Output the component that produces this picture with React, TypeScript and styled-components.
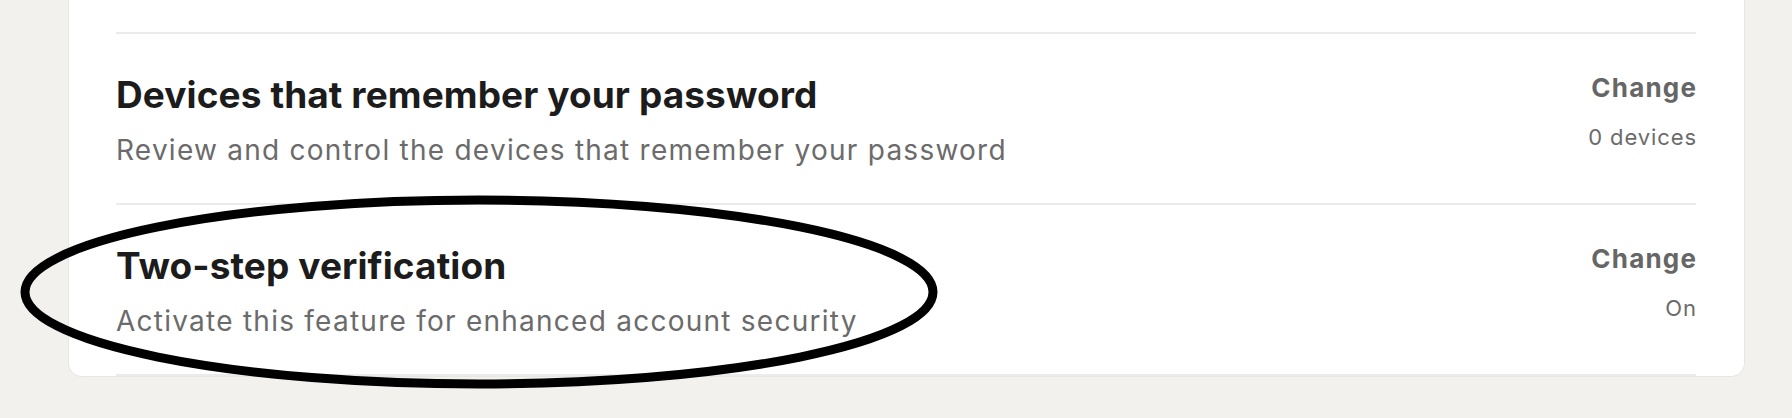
import React from "react";
import styled, { createGlobalStyle } from "styled-components";

const GlobalStyle = createGlobalStyle`
  html, body {
    margin: 0;
    padding: 0;
    background: #f2f1ee;
    font-family: Inter, "Noto Sans", "Liberation Sans", sans-serif;
    -webkit-font-smoothing: antialiased;
  }
  #root {
    position: relative;
    width: 1792px;
    height: 418px;
    overflow: hidden;
  }
`;

const Page = styled.div`
  padding: 0 47px 0 68px;
`;

const Card = styled.section`
  background: #ffffff;
  border: 1px solid #e7e6e3;
  border-top: none;
  border-radius: 0 0 14px 14px;
  padding: 32px 48px 0 47px;
`;

const Row = styled.div<{ $last?: boolean }>`
  display: flex;
  justify-content: space-between;
  align-items: flex-start;
  border-top: 2px solid #ebebeb;
  border-bottom: ${(p) => (p.$last ? "2px solid #ebebeb" : "none")};
  padding: 38px 0 34px;
`;

const Info = styled.div`
  display: flex;
  flex-direction: column;
  gap: 15px;
`;

const Title = styled.h3`
  margin: 0;
  font-size: 37px;
  line-height: 45px;
  font-weight: 700;
  color: #1c1c1c;
  letter-spacing: 0.1px;
`;

const Description = styled.p`
  margin: 0;
  font-size: 28px;
  line-height: 37px;
  font-weight: 400;
  color: #6b6b6b;
  letter-spacing: 1.25px;
`;

const Side = styled.div`
  display: flex;
  flex-direction: column;
  align-items: flex-end;
  gap: 21px;
`;

const ChangeLink = styled.a`
  font-size: 26px;
  line-height: 31px;
  font-weight: 700;
  color: #666666;
  text-decoration: none;
  letter-spacing: 1.2px;
  margin-right: -1.2px;
  cursor: pointer;
`;

const Status = styled.span`
  font-size: 22px;
  line-height: 27px;
  color: #6b6b6b;
  letter-spacing: 0.9px;
  margin-right: -0.9px;
`;

const Annotation = styled.svg`
  position: absolute;
  top: 0;
  left: 0;
  pointer-events: none;
`;

type Setting = { title: string; description: string; status: string };

const settings: Setting[] = [
  {
    title: "Devices that remember your password",
    description: "Review and control the devices that remember your password",
    status: "0 devices",
  },
  {
    title: "Two-step verification",
    description: "Activate this feature for enhanced account security",
    status: "On",
  },
];

export default function App() {
  return (
    <>
      <GlobalStyle />
      <Page>
        <Card>
          {settings.map((s, i) => (
            <Row key={s.title} $last={i === settings.length - 1}>
              <Info>
                <Title>{s.title}</Title>
                <Description>{s.description}</Description>
              </Info>
              <Side>
                <ChangeLink>Change</ChangeLink>
                <Status>{s.status}</Status>
              </Side>
            </Row>
          ))}
        </Card>
      </Page>
      <Annotation width="1792" height="418" viewBox="0 0 1792 418">
        <ellipse cx="479" cy="292" rx="454" ry="92" fill="none" stroke="#000" strokeWidth="9" />
      </Annotation>
    </>
  );
}
